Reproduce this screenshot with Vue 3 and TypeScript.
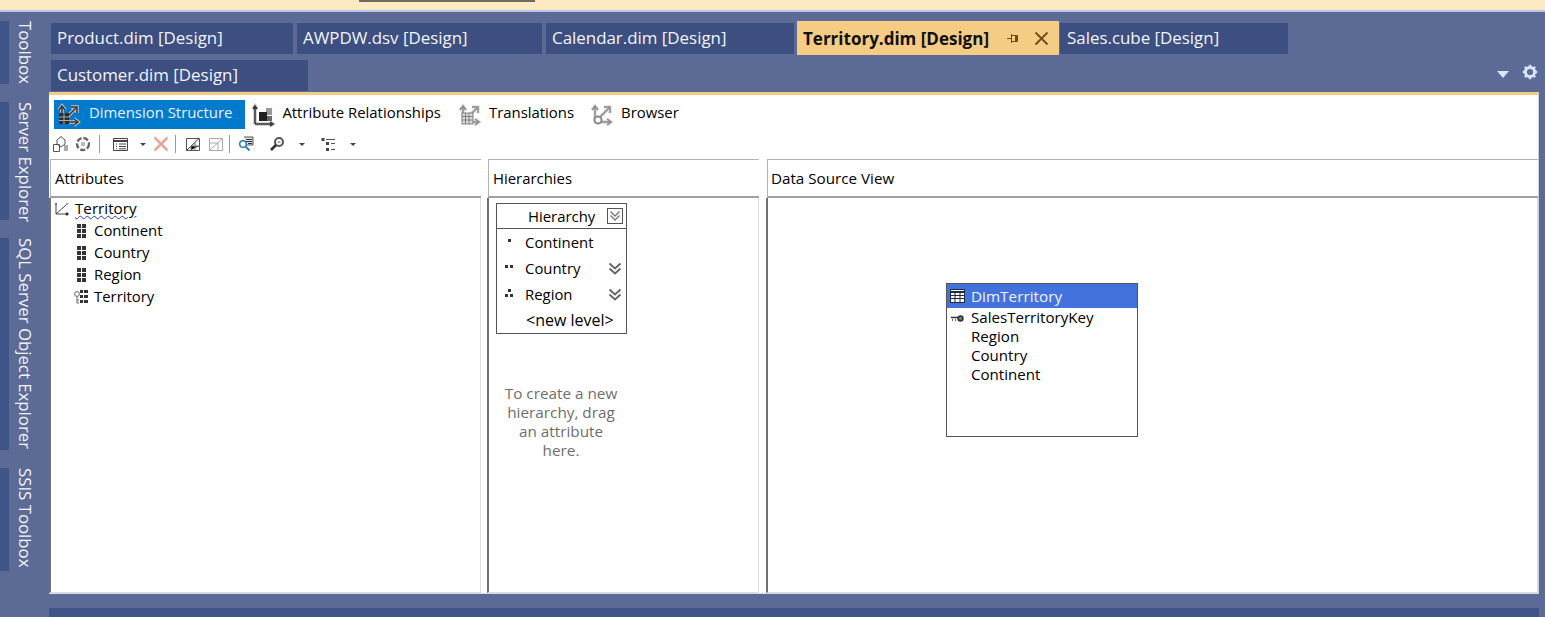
<template>
  <div class="shell">
    <div class="topbar"><span class="topbar-mark"></span></div>
    <div class="body">
      <aside class="sidebar">
        <div v-for="t in sideTools" :key="t.label" class="side-item" :style="{ height: t.height + 'px' }">
          <span class="side-rail"></span>
          <span class="side-label">{{ t.label }}</span>
        </div>
      </aside>

      <main class="main">
        <div class="tabs">
          <div class="tab-row">
            <div v-for="t in tabsTop" :key="t.label" class="tab" :class="{ active: t.active }" :style="{ width: t.width + 'px' }">
              <span>{{ t.label }}</span>
              <template v-if="t.active">
                <svg class="pin" width="14" height="14" viewBox="0 0 14 14">
                  <path d="M1 7.500h4M5.500 3v9M5.500 4.500h6v6h-6" fill="none" stroke="#6d4c1e" stroke-width="1" />
                  <rect x="9" y="5" width="2.500" height="5" fill="#6d4c1e" />
                </svg>
                <svg class="close" width="15" height="15" viewBox="0 0 15 15">
                  <path d="M1.500 1.500l12 12M13.500 1.500l-12 12" stroke="#6d4c1e" stroke-width="1.800" />
                </svg>
              </template>
            </div>
          </div>
          <div class="tab-row second">
            <div class="tab" style="width: 257px"><span>Customer.dim [Design]</span></div>
            <div class="tab-tools">
              <span class="tri-down"></span>
              <svg width="16" height="16" viewBox="0 0 16 16">
                <circle cx="8" cy="8" r="4.600" fill="none" stroke="#dde4f8" stroke-width="3" />
                <path d="M8 .8v3M8 12.200v3M.8 8h3M12.200 8h3M2.900 2.900L5 5M11 11l2.100 2.100M13.100 2.900L11 5M5 11l-2.100 2.100" stroke="#dde4f8" stroke-width="2.400" />
              </svg>
            </div>
          </div>
        </div>

        <section class="doc">
          <div class="view-tabs">
            <div v-for="v in views" :key="v.label" class="view-tab" :class="{ selected: v.selected }">
              <svg width="26" height="26" viewBox="0 0 26 26" class="view-icon">
                <g v-for="layer in iconLayers(v)" :key="layer.width" :stroke="layer.stroke" :stroke-width="layer.width" fill="none">
                  <path v-if="v.kind === 'relations'" d="M5 22V5M5 22h17M3 7l2-3 2 3M20 20l3 2-3 2" />
                  <template v-else>
                    <path d="M6 20V5M6 20h15M10 16L20 6" />
                    <path d="M3 8l3-4 3 4M15 5h6v6M18 17l4 3-4 3" />
                  </template>
                </g>
                <g v-if="v.kind === 'structure'">
                  <rect x="3" y="11" width="10" height="11" fill="#2c2c2c" />
                  <path d="M3 15h10M3 18.500h10M8 11v11" stroke="#a8a8a8" />
                </g>
                <g v-if="v.kind === 'relations'">
                  <rect x="16" y="6" width="6" height="7" fill="#9a9a9a" />
                  <rect x="16" y="14" width="6" height="5" fill="#6a6a6a" />
                  <rect x="9" y="10" width="8" height="9" fill="#222" />
                </g>
                <g v-if="v.kind === 'translations'" stroke="#808080" fill="#dcdcdc">
                  <rect x="5" y="11" width="11" height="11" />
                  <path d="M5 14.500h11M5 18h11M8.500 11v11M12 11v11" fill="none" />
                </g>
                <circle v-if="v.kind === 'browser'" cx="9" cy="18" r="3.500" fill="#fff" stroke="#8a8a8a" stroke-width="2" />
              </svg>
              <span>{{ v.label }}</span>
            </div>
          </div>

          <div class="toolbar">
            <svg class="ti" width="18" height="18" viewBox="0 0 18 18" style="margin-left: 3px">
              <path d="M1.500 9.500h6v7h-6zM5 5l4-3.500L13 5v4l-4 3-4-3z" fill="none" stroke="#555" />
              <path d="M12 10h4v6h-4z" fill="#aaa" />
            </svg>
            <svg class="ti" width="18" height="18" viewBox="0 0 18 18" style="margin-left: 4px">
              <circle cx="9" cy="9" r="6" fill="none" stroke="#666" stroke-width="2.400" stroke-dasharray="5 2" />
              <rect x="7" y="7" width="4" height="4" fill="#bbb" />
            </svg>
            <span class="sep" style="margin: 0 13px 0 7px"></span>
            <svg class="ti" width="15" height="13" viewBox="0 0 15 13">
              <path d="M.5.500h14v12H.5z" fill="#fff" stroke="#444" />
              <path d="M0 3h15" stroke="#444" stroke-width="2" />
              <path d="M3 6h1M6 6h7M3 8.500h1M6 8.500h7M3 10.800h1M6 10.800h7" stroke="#444" />
            </svg>
            <span class="caret" style="margin: 0 5px 0 12px"></span>
            <svg class="ti" width="16" height="16" viewBox="0 0 16 16" style="margin-left: 2px">
              <path d="M1.500 1.500l13 13M14.500 1.500l-13 13" stroke="#e8a79b" stroke-width="2.500" />
            </svg>
            <span class="sep" style="margin: 0 10px 0 6px"></span>
            <svg class="ti" width="14" height="13" viewBox="0 0 14 13">
              <path d="M.5.500h13v12H.5z" fill="#fff" stroke="#555" />
              <path d="M.5 12.500L13 .5" stroke="#333" />
              <path d="M5 12V8h8M9 12V5" stroke="#777" />
            </svg>
            <svg class="ti" width="14" height="13" viewBox="0 0 14 13" style="margin-left: 9px">
              <path d="M.5.500h13v12H.5z" fill="#fff" stroke="#aaa" />
              <path d="M1 12L13 1M1 5h8v7" stroke="#aaa" fill="none" />
            </svg>
            <span class="sep" style="margin: 0 8px 0 6px"></span>
            <svg class="ti" width="16" height="16" viewBox="0 0 16 16">
              <path d="M6 1h9v8H9" fill="#ddd" stroke="#555" />
              <path d="M8 3.500h6M8 5.500h6M10 7.500h4" stroke="#333" />
              <circle cx="5" cy="8" r="3.300" fill="#fff" stroke="#2d7bc4" stroke-width="1.500" />
              <path d="M7.500 10.500l4 4" stroke="#2d7bc4" stroke-width="1.800" />
            </svg>
            <svg class="ti" width="16" height="16" viewBox="0 0 16 16" style="margin-left: 15px">
              <circle cx="10" cy="6" r="4" fill="#fff" stroke="#555" stroke-width="2" />
              <path d="M7 9l-5 5" stroke="#333" stroke-width="2.600" />
              <path d="M8.500 6h3" stroke="#555" />
            </svg>
            <span class="caret" style="margin: 0 16px 0 14px"></span>
            <svg class="ti" width="15" height="15" viewBox="0 0 15 15">
              <path d="M.5 1h3v3h-3zM5 5h3v3H5zM5 11h3v3H5z" fill="#444" />
              <path d="M5 2.500h9M10 6.500h4M10 12.500h4" stroke="#555" />
            </svg>
            <span class="caret" style="margin-left: 14px"></span>
          </div>

          <div class="panes">
            <div class="pane attrs">
              <header class="pane-head">Attributes</header>
              <div class="pane-body tree">
                <div class="tree-root">
                  <svg width="15" height="15" viewBox="0 0 15 15">
                    <path d="M2 1v11h11M2 12L12 3" fill="none" stroke="#444" />
                    <path d="M1 2h2M12 2h2M12 11h2v2h-2z" stroke="#444" />
                  </svg>
                  <span class="squiggle">Territory</span>
                </div>
                <div v-for="a in attributes" :key="a" class="tree-item">
                  <svg width="9" height="14" viewBox="0 0 9 14">
                    <path d="M0 0h4v4H0zM5 0h4v4H5zM0 5h4v4H0zM5 5h4v4H5zM0 10h4v4H0zM5 10h4v4H5z" fill="#333" />
                  </svg>
                  <span>{{ a }}</span>
                </div>
                <div class="tree-item key">
                  <svg width="14" height="14" viewBox="0 0 14 14">
                    <path d="M6 0h3v3H6zM10 0h4v3h-4zM6 5h3v3H6zM10 5h4v3h-4zM6 10h3v3H6zM10 10h4v3h-4z" fill="#333" />
                    <circle cx="3" cy="4" r="2.400" fill="#fff" stroke="#666" />
                    <path d="M3 6.500V13M3 10h2M3 13h2" stroke="#666" />
                  </svg>
                  <span>Territory</span>
                </div>
              </div>
            </div>

            <div class="pane hier">
              <header class="pane-head">Hierarchies</header>
              <div class="pane-body">
                <div class="hier-card">
                  <div class="hier-title">
                    <span>Hierarchy</span>
                    <svg class="hier-toggle" width="16" height="16" viewBox="0 0 16 16">
                      <rect x=".5" y=".5" width="15" height="15" fill="#fff" stroke="#555" />
                      <path d="M3.500 3.500L8 8l4.500-4.500M3.500 7.500L8 12l4.500-4.500" fill="none" stroke="#777" stroke-width="1.300" />
                    </svg>
                  </div>
                  <div v-for="l in levels" :key="l.label" class="hier-level">
                    <svg class="dots" width="9" height="8" viewBox="0 0 9 8">
                      <rect v-for="(d, i) in l.dots" :key="i" :x="d[0]" :y="d[1]" width="3" height="3" fill="#333" />
                    </svg>
                    <span>{{ l.label }}</span>
                    <svg v-if="l.more" class="more" width="14" height="14" viewBox="0 0 14 14">
                      <path d="M1.500 1.500L7 6.500l5.500-5M1.500 6.500L7 11.500l5.500-5" fill="none" stroke="#666" stroke-width="1.900" />
                    </svg>
                  </div>
                  <div class="hier-new">&lt;new level&gt;</div>
                </div>
                <p class="hier-hint">To create a new<br>hierarchy, drag<br>an attribute<br>here.</p>
              </div>
            </div>

            <div class="pane dsv">
              <header class="pane-head">Data Source View</header>
              <div class="pane-body canvas">
                <div class="table-node">
                  <div class="table-title">
                    <svg width="15" height="14" viewBox="0 0 15 14">
                      <rect x=".5" y=".5" width="14" height="13" fill="#fff" stroke="#1f2a44" />
                      <path d="M0 3h15" stroke="#1f2a44" stroke-width="2" />
                      <path d="M1 6.500h13M1 9.500h13M5 4v9M10 4v9" stroke="#1f2a44" />
                    </svg>
                    <span>DimTerritory</span>
                  </div>
                  <div class="table-cols">
                    <div v-for="c in columns" :key="c.name" class="table-col">
                      <svg v-if="c.key" class="key-icon" width="13" height="7" viewBox="0 0 13 7">
                        <circle cx="9.500" cy="3.500" r="2.300" fill="#888" stroke="#333" stroke-width="1.800" />
                        <path d="M0 2.500h7M1 5h1M4 5h1" stroke="#333" stroke-width="1.700" />
                      </svg>
                      <span>{{ c.name }}</span>
                    </div>
                  </div>
                </div>
              </div>
            </div>
          </div>
        </section>
        <div class="statusbar"></div>
      </main>
    </div>
  </div>
</template>

<script setup lang="ts">
interface ViewTab {
  label: string
  kind: string
  selected?: boolean
  muted?: boolean
}

const sideTools = [
  { label: 'Toolbox', height: 63 },
  { label: 'Server Explorer', height: 118 },
  { label: 'SQL Server Object Explorer', height: 212 },
  { label: 'SSIS Toolbox', height: 103 }
]

const tabsTop = [
  { label: 'Product.dim [Design]', width: 242 },
  { label: 'AWPDW.dsv [Design]', width: 245 },
  { label: 'Calendar.dim [Design]', width: 248 },
  { label: 'Territory.dim [Design]', width: 262, active: true },
  { label: 'Sales.cube [Design]', width: 228 }
]

const views: ViewTab[] = [
  { label: 'Dimension Structure', kind: 'structure', selected: true },
  { label: 'Attribute Relationships', kind: 'relations' },
  { label: 'Translations', kind: 'translations', muted: true },
  { label: 'Browser', kind: 'browser', muted: true }
]

// halo underneath, dark line on top
const iconLayers = (v: ViewTab) => [
  { stroke: v.muted ? '#dedede' : '#c8c8c8', width: 3.5 },
  { stroke: v.muted ? '#8a8a8a' : '#333', width: 1.5 }
]

const attributes = ['Continent', 'Country', 'Region']

const levels = [
  { label: 'Continent', dots: [[3, 2]], more: false },
  { label: 'Country', dots: [[0, 2], [5, 2]], more: true },
  { label: 'Region', dots: [[3, 0], [0, 5], [5, 5]], more: true }
]

const columns = [
  { name: 'SalesTerritoryKey', key: true },
  { name: 'Region' },
  { name: 'Country' },
  { name: 'Continent' }
]
</script>

<style>
html, body { margin: 0; background: #5c6a96; overflow: hidden; }
</style>

<style scoped>
.shell {
  width: 1545px;
  height: 617px;
  display: flex;
  flex-direction: column;
  overflow: hidden;
  background: #5c6a96;
  font-family: "Open Sans", "Noto Sans", sans-serif;
  font-size: 14.9px;
  color: #000;
}
.topbar {
  height: 10px;
  flex: none;
  background: #feeac2;
  border-bottom: 2px solid #b9c6ef;
  padding-left: 359px;
}
.topbar-mark {
  display: block;
  width: 176px;
  height: 2px;
  background: #6e6a60;
}
.body { flex: 1; display: flex; min-height: 0; }

.sidebar {
  width: 49px;
  flex: none;
  padding-top: 9px;
  display: flex;
  flex-direction: column;
  gap: 18px;
}
.side-item { display: flex; }
.side-rail { width: 9px; background: #3f5487; }
.side-label {
  writing-mode: vertical-rl;
  margin-left: 6px;
  width: 20px;
  line-height: 20px;
  color: #f2f4fb;
  white-space: nowrap;
  font-size: 16.8px;
}

.main { flex: 1; display: flex; flex-direction: column; min-width: 0; padding-right: 6px; }
.tabs { height: 80px; flex: none; }
.tab-row { display: flex; gap: 4px; padding: 11px 0 0 2px; height: 32px; }
.tab-row.second { padding-top: 5px; height: 31px; }
.tab {
  height: 31px;
  background: #3c4f80;
  color: #f2f4fb;
  display: flex;
  align-items: center;
  padding: 0 0 3px 6px;
  box-sizing: border-box;
  white-space: nowrap;
  font-size: 16.9px;
}
.tab-row:first-child .tab:last-child { padding-left: 7px; }
.tab.active {
  background: #f5cc84;
  color: #111;
  font-weight: 700;
  height: 34px;
  margin: -2px -3px 0 -1px;
  padding-bottom: 0;
  font-size: 17px;
}
.tab.active .pin { margin-left: 17px; }
.tab.active .close { margin-left: 14px; }
.tab-tools {
  margin-left: auto;
  display: flex;
  align-items: flex-start;
  gap: 13px;
  padding: 4px 1px 0 0;
}
.tri-down {
  width: 0;
  height: 0;
  border-left: 6px solid transparent;
  border-right: 6px solid transparent;
  border-top: 7px solid #dde4f8;
  margin-top: 7px;
}

.doc {
  height: 502px;
  flex: none;
  box-sizing: border-box;
  background: #fff;
  border-top: 3px solid #f5cc84;
  border-bottom: 1px solid #d8dbe6;
  border-right: 1px solid #c9cde0;
  display: flex;
  flex-direction: column;
}
.view-tabs { display: flex; align-items: center; padding: 5px 0 0 5px; height: 29px; }
.view-tab {
  display: flex;
  align-items: center;
  height: 29px;
  padding: 0 13px 0 2px;
  white-space: nowrap;
}
.view-tab span { margin: -5px 0 0 6px; }
.view-tab .view-icon { flex: none; }
.view-tab.selected {
  background: #007acc;
  color: #eaf3fb;
  margin-right: 3px;
}
.view-tab.selected span { margin-left: 7px; }
.view-tab:nth-child(2) { padding-right: 14px; }
.toolbar {
  height: 24px;
  margin-top: 3px;
  display: flex;
  align-items: center;
}
.ti { flex: none; }
.sep { width: 1px; height: 18px; background: #999; flex: none; }
.caret {
  width: 0;
  height: 0;
  border-left: 3px solid transparent;
  border-right: 3px solid transparent;
  border-top: 3px solid #444;
  flex: none;
}

.panes { flex: 1; display: flex; margin-top: 3px; min-height: 0; }
.pane {
  display: flex;
  flex-direction: column;
  box-sizing: border-box;
  min-height: 0;
}
.attrs { width: 432px; margin-right: 6px; }
.hier { width: 272px; margin-right: 7px; }
.dsv { flex: 1; }
.pane-head {
  height: 39px;
  flex: none;
  box-sizing: border-box;
  border-top: 1px solid #b4b4b4;
  border-left: 1px solid #b4b4b4;
  border-bottom: 2px solid #a0a0a0;
  padding-left: 4px;
  display: flex;
  align-items: center;
  margin-left: 1px;
}
.dsv .pane-head { padding-left: 3px; font-size: 15.2px; }
.pane-body {
  flex: 1;
  position: relative;
  min-height: 0;
  box-sizing: border-box;
  border-left: 2px solid #707070;
  border-right: 1px solid #ddd;
  border-bottom: 1px solid #ddd;
}

.tree { padding: 0 0 0 3px; }
.tree-root, .tree-item { height: 22px; display: flex; align-items: center; }
.tree-root span { margin-left: 6px; font-size: 15.2px; }
.squiggle {
  text-decoration: underline wavy #1a3fc4 1px;
  text-underline-offset: 1px;
}
.tree-item { padding-left: 23px; }
.tree-item span { margin-left: 8px; }
.tree-item.key { padding-left: 20px; }
.tree-item.key span { margin-left: 6px; }
.tree-root span, .tree-item span { margin-top: -2px; }

.hier-card {
  width: 131px;
  margin: 5px 0 0 7px;
  box-sizing: border-box;
  border: 1px solid #555;
}
.hier-title {
  height: 25px;
  border-bottom: 1px solid #555;
  box-sizing: border-box;
  display: flex;
  align-items: center;
  padding-left: 31px;
  position: relative;
}
.hier-toggle { position: absolute; right: 3px; top: 4px; }
.hier-level {
  height: 26px;
  display: flex;
  align-items: center;
  position: relative;
  padding-left: 28px;
}
.dots { position: absolute; left: 8px; top: 8px; }
.more { position: absolute; right: 4px; top: 7px; }
.hier-new { height: 26px; line-height: 26px; padding-left: 29px; font-size: 16px; }
.hier-hint {
  margin: 50px 0 0 7px;
  width: 130px;
  text-align: center;
  line-height: 19px;
  color: #6e6e6e;
  font-size: 15.3px;
}

.canvas { overflow: hidden; }
.table-node {
  position: absolute;
  left: 178px;
  top: 85px;
  width: 192px;
  height: 154px;
  box-sizing: border-box;
  border: 1px solid #555;
}
.table-title {
  height: 24px;
  background: #4472dc;
  color: #eef2fc;
  display: flex;
  align-items: center;
  gap: 6px;
  padding-left: 3px;
  font-size: 15.3px;
}
.table-cols { padding-top: 1px; font-size: 15.1px; }
.table-col {
  height: 19px;
  line-height: 17px;
  padding-left: 24px;
  position: relative;
}
.key-icon { position: absolute; left: 4px; top: 6px; }

.statusbar { height: 9px; background: #3f5489; margin-top: 14px; flex: none; }
</style>
